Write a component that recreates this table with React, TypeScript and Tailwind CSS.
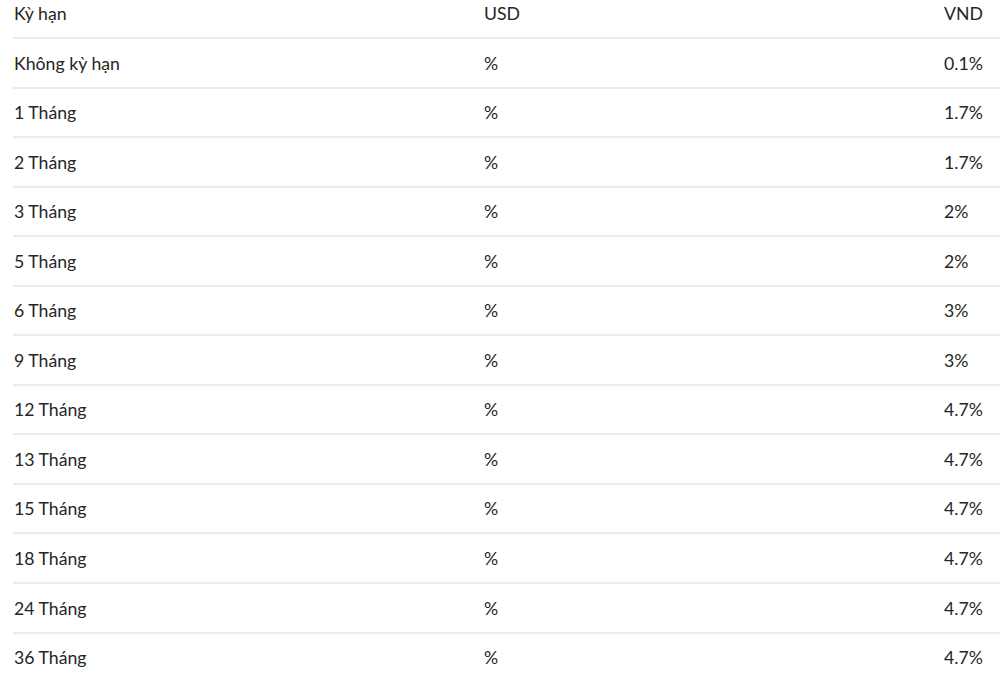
const rows: [string, string, string][] = [
  ['Không kỳ hạn', '%', '0.1%'],
  ['1 Tháng', '%', '1.7%'],
  ['2 Tháng', '%', '1.7%'],
  ['3 Tháng', '%', '2%'],
  ['5 Tháng', '%', '2%'],
  ['6 Tháng', '%', '3%'],
  ['9 Tháng', '%', '3%'],
  ['12 Tháng', '%', '4.7%'],
  ['13 Tháng', '%', '4.7%'],
  ['15 Tháng', '%', '4.7%'],
  ['18 Tháng', '%', '4.7%'],
  ['24 Tháng', '%', '4.7%'],
  ['36 Tháng', '%', '4.7%'],
]

export default function App() {
  return (
    <div className="h-[674px] w-[1000px] overflow-hidden bg-white pl-[13px] text-[17.7px] text-[#262626] font-['Lato','Noto_Sans',sans-serif]">
      {/* Header */}
      <div className="grid h-[39px] grid-cols-[471px_460px_1fr] items-start border-b-2 border-[#ebebeb] pt-[1px]">
        <div className="pl-[1px] leading-[26px]">Kỳ hạn</div>
        <div className="leading-[26px]">USD</div>
        <div className="leading-[26px]">VND</div>
      </div>

      {rows.map(([term, usd, vnd]) => (
        <div
          key={term}
          className="grid h-[49.55px] grid-cols-[471px_460px_1fr] items-center border-b-2 border-[#ebebeb] pt-[2px]"
        >
          <div className="pl-[1px]">{term}</div>
          <div>{usd}</div>
          <div>{vnd}</div>
        </div>
      ))}
    </div>
  )
}
